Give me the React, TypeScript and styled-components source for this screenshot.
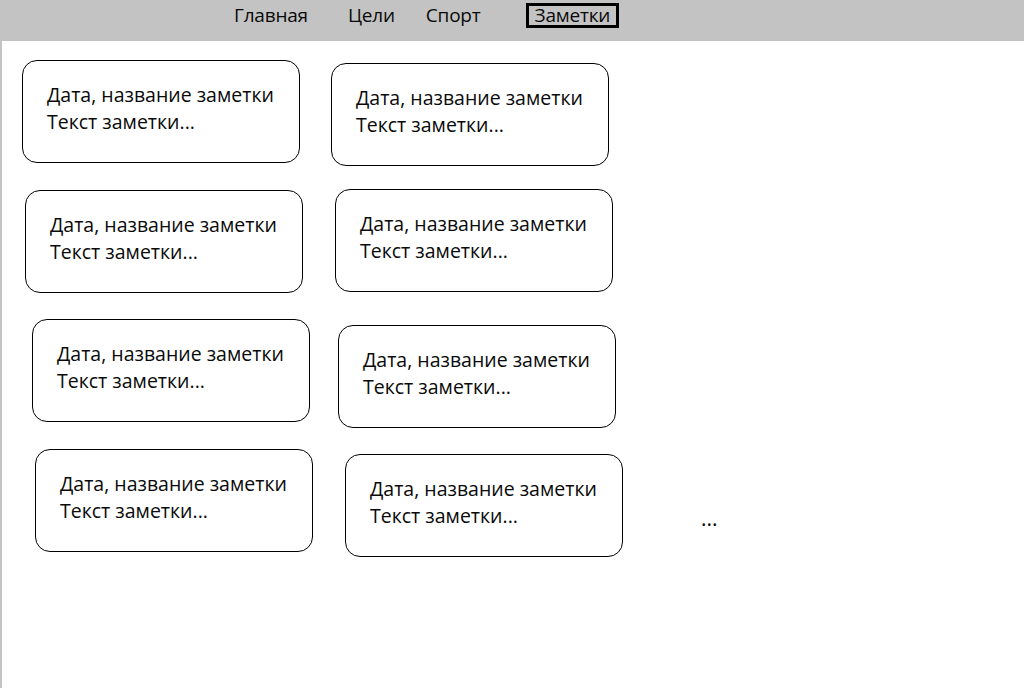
import React from "react";
import styled, { createGlobalStyle } from "styled-components";

const GlobalStyle = createGlobalStyle`
  html, body { margin: 0; padding: 0; background: #ffffff; }
  body { font-family: "Open Sans", "Noto Sans", sans-serif; color: #0a0a0a; }
`;

const Page = styled.div`
  width: 1024px;
  height: 688px;
  display: flex;
  flex-direction: column;
  overflow: hidden;
`;

const TopBar = styled.nav`
  height: 41px;
  flex: none;
  background: #c3c3c3;
  display: flex;
  align-items: flex-start;
  padding-left: 227px;
  box-sizing: border-box;
`;

const NavItem = styled.span<{ $gap: number; $active?: boolean }>`
  margin-left: ${(p) => p.$gap}px;
  margin-top: 3px;
  height: 25px;
  box-sizing: border-box;
  padding: 0 ${(p) => (p.$active ? 6 : 4)}px 1px;
  border: ${(p) => (p.$active ? "3px solid #000" : "3px solid transparent")};
  font-size: 19px;
  line-height: 18px;
  display: flex;
  align-items: center;
  color: #0a0a0a;
  letter-spacing: -0.2px;
`;

const Main = styled.main`
  flex: 1;
  border-left: 2px solid #c3c3c3;
  padding: 19px 0 0 20px;
  display: flex;
  flex-direction: column;
  gap: 27px;
`;

const Row = styled.div`
  height: 103px;
  display: flex;
  align-items: flex-start;
  gap: 31px;
`;

const Card = styled.div<{ $dx: number; $dy: number }>`
  width: 278px;
  height: 103px;
  flex: none;
  box-sizing: border-box;
  border: 1px solid #000;
  border-radius: 15px;
  margin-left: ${(p) => p.$dx}px;
  margin-top: ${(p) => p.$dy}px;
  padding: 20px 0 0 24px;
  font-size: 19.5px;
  line-height: 27px;
  color: #0a0a0a;
`;

const Line = styled.div`
  white-space: nowrap;
`;

const More = styled.span`
  margin-left: 47px;
  margin-top: 58px;
  font-size: 21px;
  line-height: 20px;
  color: #0a0a0a;
`;

type CardPos = { dx: number; dy: number };

const rows: { a: CardPos; b: CardPos; more?: boolean }[] = [
  { a: { dx: 0, dy: 0 }, b: { dx: 0, dy: 3 } },
  { a: { dx: 3, dy: 0 }, b: { dx: 1, dy: -1 } },
  { a: { dx: 10, dy: -1 }, b: { dx: -3, dy: 5 } },
  { a: { dx: 13, dy: -1 }, b: { dx: 1, dy: 4 }, more: true },
];

const Note = ({ pos }: { pos: CardPos }) => (
  <Card $dx={pos.dx} $dy={pos.dy}>
    <Line>Дата, название заметки</Line>
    <Line>Текст заметки...</Line>
  </Card>
);

export default function App() {
  return (
    <>
      <GlobalStyle />
      <Page>
        <TopBar>
          <NavItem $gap={0}>Главная</NavItem>
          <NavItem $gap={26}>Цели</NavItem>
          <NavItem $gap={17}>Спорт</NavItem>
          <NavItem $gap={38} $active>
            Заметки
          </NavItem>
        </TopBar>
        <Main>
          {rows.map((r, i) => (
            <Row key={i}>
              <Note pos={r.a} />
              <Note pos={r.b} />
              {r.more && <More>...</More>}
            </Row>
          ))}
        </Main>
      </Page>
    </>
  );
}
